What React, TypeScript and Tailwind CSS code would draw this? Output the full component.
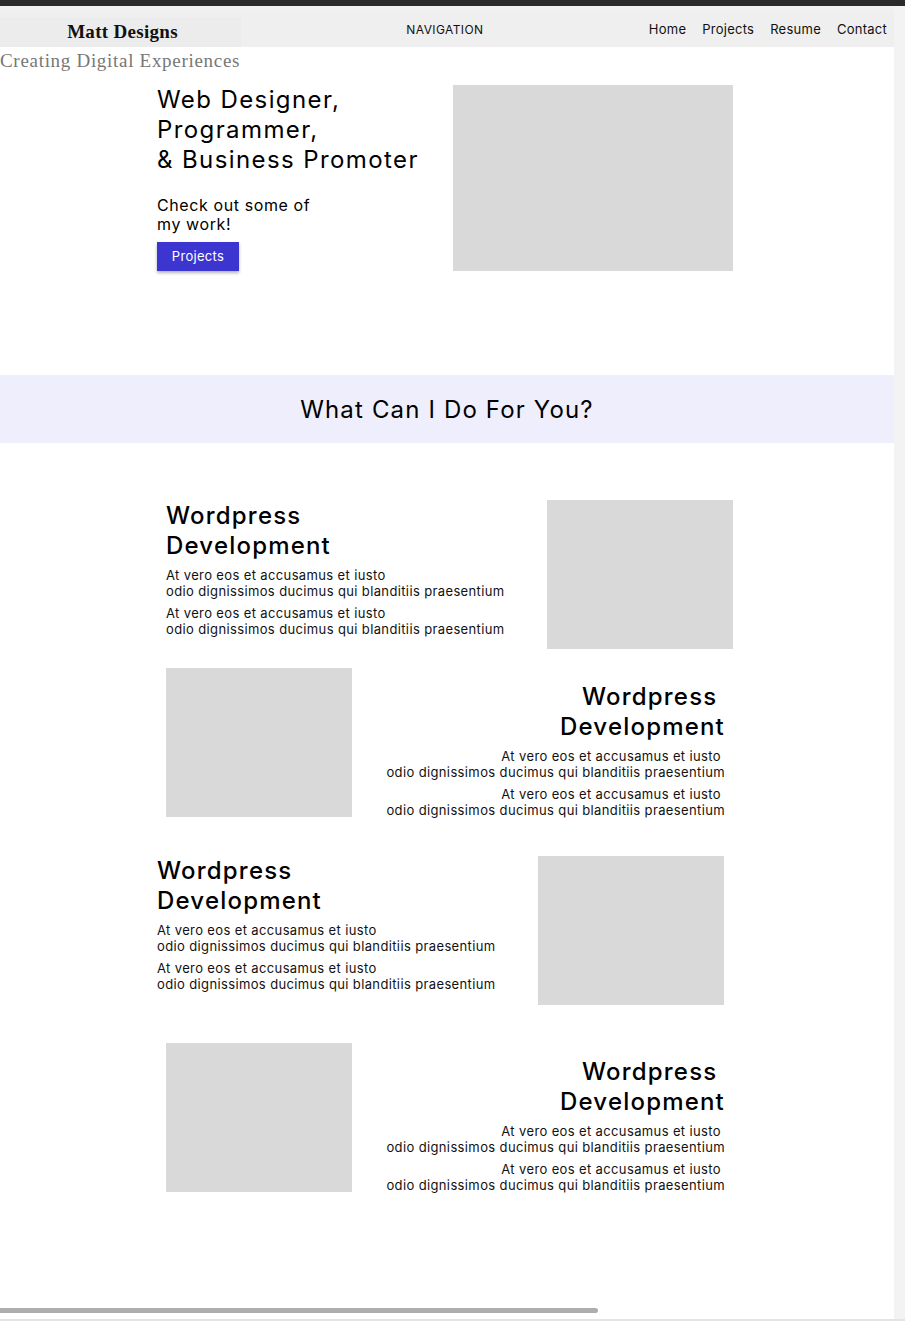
import React from "react";

const sans = "font-['Inter','Noto_Sans',sans-serif]";

function Para({ right }: { right?: boolean }) {
  return (
    <div className={`flex flex-col gap-[7px] text-[13px] leading-[15.5px] tracking-[0.37px] text-[#111] ${right ? "items-end text-right" : ""}`}>
      <p>
        At vero eos et accusamus et iusto{right ? "\u00a0" : ""}
        <br />
        odio dignissimos ducimus qui blanditiis praesentium
      </p>
      <p>
        At vero eos et accusamus et iusto{right ? "\u00a0" : ""}
        <br />
        odio dignissimos ducimus qui blanditiis praesentium
      </p>
    </div>
  );
}

function Block({ right, pt }: { right?: boolean; pt: string }) {
  return (
    <div className={`flex flex-col ${pt} ${right ? "items-end text-right" : ""}`}>
      <h3 className="text-[24px] leading-[30px] font-medium tracking-[1.2px] text-black mb-[7px]">
        Wordpress{right ? "\u00a0" : ""}
        <br />
        Development
      </h3>
      <Para right={right} />
    </div>
  );
}

function Img({ w = "w-[186px]", h = "h-[149px]" }: { w?: string; h?: string }) {
  return <div className={`${w} ${h} bg-[#d9d9d9] shrink-0`} />;
}

export default function App() {
  return (
    <div className={`w-[905px] h-[1321px] bg-white overflow-hidden flex flex-col ${sans}`}>
      <div className="h-[6px] bg-[#2b2b2b] shrink-0" />
      <div className="flex flex-1">
        <div className="w-[894px] flex flex-col relative">
          <div className="h-[5px] bg-[#f1f1f1]" />
          {/* nav */}
          <nav className="h-[36px] bg-[#efefef] flex items-end">
            <div className="w-[241px] h-[30px] bg-[#ececec] flex items-center justify-center">
              <span className="font-['Liberation_Serif',serif] text-[19px] font-bold text-[#111] tracking-[0.3px] mt-[1px] ml-[4px]">
                Matt Designs
              </span>
            </div>
            <div className="flex-1 h-full flex items-center justify-center pt-[2px] text-[12px] tracking-[0.4px] text-[#111]">
              NAVIGATION
            </div>
            <ul className="h-full flex items-center gap-[16px] pr-[7px] pt-[2px] text-[13px] tracking-[0.25px] text-[#111]">
              <li>Home</li>
              <li>Projects</li>
              <li>Resume</li>
              <li>Contact</li>
            </ul>
          </nav>
          <p className="font-['Liberation_Serif',serif] text-[19px] leading-[28px] text-[#777] tracking-[0.7px]">
            Creating Digital Experiences
          </p>
          {/* hero */}
          <section className="mt-[10px] ml-[157px] w-[576px] flex justify-between">
            <div className="flex flex-col">
              <h1 className="text-[24px] leading-[30px] tracking-[1.4px] text-black">
                Web Designer,
                <br />
                Programmer,
                <br />& Business Promoter
              </h1>
              <p className="mt-[21px] text-[16px] leading-[19px] tracking-[0.6px] text-black">
                Check out some of
                <br />
                my work!
              </p>
              <button className="mt-[8px] w-[82px] h-[29px] bg-[#3d35cf] text-white text-[13px] tracking-[0.3px] shadow-[0_2px_3px_rgba(0,0,0,0.3)]">
                Projects
              </button>
            </div>
            <Img w="w-[280px]" h="h-[186px]" />
          </section>
          {/* band */}
          <section className="mt-[104px] h-[68px] bg-[#eeeefc] flex items-center justify-center">
            <h2 className="text-[24px] text-black tracking-[1.15px] pt-[2px]">What Can I Do For You?</h2>
          </section>
          {/* rows */}
          <div className="mt-[57px] flex flex-col">
            <div className="ml-[166px] w-[567px] flex justify-between">
              <Block pt="pt-[1px]" />
              <Img />
            </div>
            <div className="mt-[19px] ml-[166px] w-[559px] flex justify-between items-start">
              <Img />
              <Block right pt="pt-[14px]" />
            </div>
            <div className="mt-[38px] ml-[157px] w-[567px] flex justify-between">
              <Block pt="pt-0" />
              <Img />
            </div>
            <div className="mt-[38px] ml-[166px] w-[559px] flex justify-between items-start">
              <Img />
              <Block right pt="pt-[14px]" />
            </div>
          </div>
          <div className="absolute left-0 top-[1302px] w-[598px] h-[5px] bg-[#adadad] rounded-r-full" />
        </div>
        <div className="w-[11px] bg-[#f3f3f3]" />
      </div>
      <div className="h-[2px] bg-[#e3e3e3] shrink-0" />
    </div>
  );
}
